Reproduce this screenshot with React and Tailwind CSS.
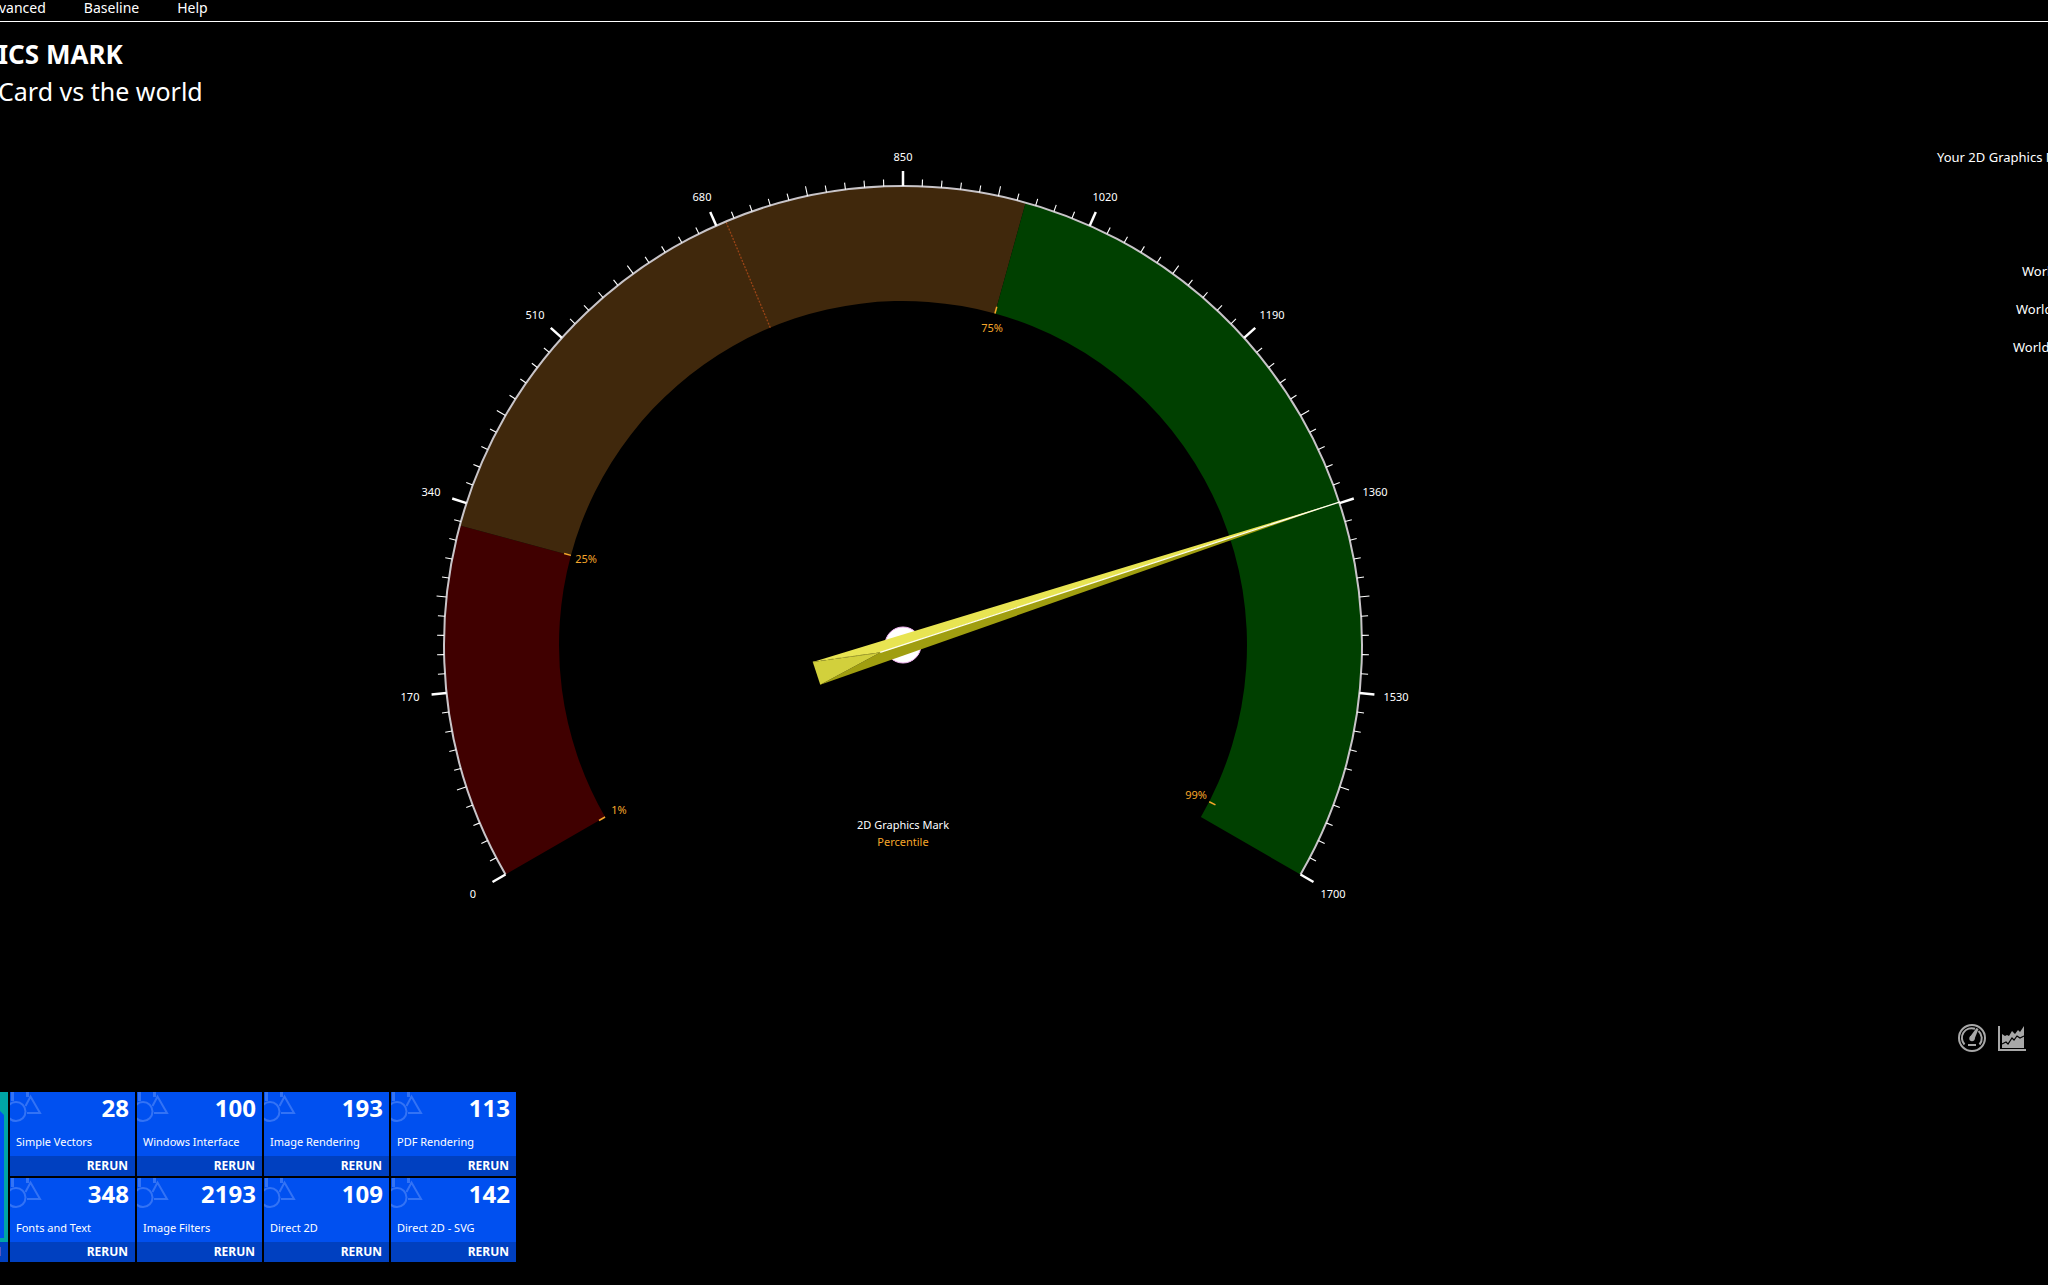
import { useState } from 'react';

const CENTER = { x: 530, y: 505 };
const OUTER = 459;
const INNER = 344;
const MAX_MARK = 1700;

const TESTS = [
  { name: 'Simple Vectors', score: 28 },
  { name: 'Windows Interface', score: 100 },
  { name: 'Image Rendering', score: 193 },
  { name: 'PDF Rendering', score: 113 },
  { name: 'Fonts and Text', score: 348 },
  { name: 'Image Filters', score: 2193 },
  { name: 'Direct 2D', score: 109 },
  { name: 'Direct 2D - SVG', score: 142 },
];

const SCALE = [
  { value: 0, x: 100, y: 758 },
  { value: 170, x: 37, y: 561 },
  { value: 340, x: 58, y: 356 },
  { value: 510, x: 162, y: 179 },
  { value: 680, x: 329, y: 61 },
  { value: 850, x: 530, y: 21 },
  { value: 1020, x: 732, y: 61 },
  { value: 1190, x: 899, y: 179 },
  { value: 1360, x: 1002, y: 356 },
  { value: 1530, x: 1023, y: 561 },
  { value: 1700, x: 960, y: 758 },
];

const PERCENTILES = [
  { label: '1%', angle: 210, x: 246, y: 674 },
  { label: '25%', angle: 164.9, x: 213, y: 423 },
  { label: '75%', angle: 74.5, x: 619, y: 192 },
  { label: '99%', angle: -27.1, x: 823, y: 659 },
];

const MENU = ['vanced', 'Baseline', 'Help'];

function polar(angle, radius) {
  const rad = (angle * Math.PI) / 180;
  return [CENTER.x + radius * Math.cos(rad), CENTER.y - radius * Math.sin(rad)];
}

function band(from, to) {
  const large = from - to > 180 ? 1 : 0;
  return [
    `M ${polar(from, OUTER).join(' ')}`,
    `A ${OUTER} ${OUTER} 0 ${large} 1 ${polar(to, OUTER).join(' ')}`,
    `L ${polar(to, INNER).join(' ')}`,
    `A ${INNER} ${INNER} 0 ${large} 0 ${polar(from, INNER).join(' ')}`,
    'Z',
  ].join(' ');
}

function Spoke({ angle, from, to, ...props }) {
  const [x1, y1] = polar(angle, from);
  const [x2, y2] = polar(angle, to);
  return <line x1={x1} y1={y1} x2={x2} y2={y2} {...props} />;
}

function Gauge({ mark }) {
  const ticks = Array.from({ length: 101 }, (_, i) => i);
  const needle = 210 - (mark / MAX_MARK) * 240;

  return (
    <svg
      viewBox="0 0 1060 780"
      className="h-[780px] w-[1060px] shrink-0 text-[11px]"
      role="img"
      aria-label="2D Graphics Mark gauge"
    >
      <path d={band(210, 164.9)} fill="#400000" />
      <path d={band(164.9, 74.5)} fill="#40280c" />
      <path d={band(74.5, -30)} fill="#004000" />
      <Spoke angle={112.7} from={INNER} to={OUTER} stroke="#9a4416" strokeWidth="1.3" strokeDasharray="2 1.4" />
      <path
        d={`M ${polar(210, OUTER).join(' ')} A ${OUTER} ${OUTER} 0 1 1 ${polar(-30, OUTER).join(' ')}`}
        fill="none"
        stroke="#c8c4c8"
        strokeWidth="2"
      />
      {ticks.map((i) => {
        const major = i % 10 === 0;
        const length = major ? 15 : i % 5 === 0 ? 10 : 7;
        return (
          <Spoke
            key={i}
            angle={210 - i * 2.4}
            from={OUTER}
            to={OUTER + length}
            stroke="#ffffff"
            strokeWidth={major ? 2.5 : 1.1}
          />
        );
      })}

      {SCALE.map(({ value, x, y }) => (
        <text key={value} x={x} y={y} textAnchor="middle" fill="#ffffff">
          {value}
        </text>
      ))}
      {PERCENTILES.map(({ label, angle, x, y }) => (
        <g key={label}>
          <Spoke angle={angle} from={INNER} to={INNER + 7} stroke="#f5a62a" strokeWidth="1.5" />
          <text x={x} y={y} textAnchor="middle" fill="#f5a62a">
            {label}
          </text>
        </g>
      ))}
      <text x="530" y="689" textAnchor="middle" fill="#ffffff">
        2D Graphics Mark
      </text>
      <text x="530" y="706" textAnchor="middle" fill="#f5a62a">
        Percentile
      </text>

      <circle cx={CENTER.x} cy={CENTER.y} r="18" fill="#ffffff" stroke="#f0b0f0" />
      <g transform={`translate(${CENTER.x} ${CENTER.y}) rotate(${-needle})`}>
        <path d="M-91 -12 L460 0 L-24 0 Z" fill="#e8e452" />
        <path d="M-91 12 L460 0 L-24 0 Z" fill="#a09e10" />
        <path d="M-91 -12 L-24 0 L-91 12 Z" fill="#d2d03c" />
        <path d="M-91 -12 L-24 0" stroke="#a09e30" strokeWidth="1" strokeDasharray="5 3" />
        <path d="M-24 0 L460 0" stroke="#fffff0" strokeWidth="1.3" />
      </g>
    </svg>
  );
}

function ShapesIcon() {
  return (
    <svg
      viewBox="0 0 32 30"
      className="absolute left-0 top-0 h-[30px] w-8"
      fill="none"
      stroke="#3373f5"
      strokeWidth="2"
      aria-hidden="true"
    >
      <circle cx="6" cy="19.5" r="9.5" />
      <path d="M2.5 0 V9" strokeWidth="3" />
      <path d="M17.5 0 V5" strokeWidth="3" />
      <path d="M17 21 H30 L20.5 4.5 L15.5 14" />
    </svg>
  );
}

function TestTile({ name, score }) {
  return (
    <article className="relative flex h-[84px] flex-col overflow-hidden bg-[#0050f0] text-white">
      <ShapesIcon />
      <p className="pr-[6px] text-right text-[24px] leading-8 font-bold">{score}</p>
      <h2 className="mt-2 pl-[6px] text-[11px] leading-5 whitespace-nowrap">{name}</h2>
      <button type="button" className="mt-auto h-5 bg-[#0040c0] pr-[7px] text-right text-[12px] leading-5 font-bold">
        RERUN
      </button>
    </article>
  );
}

function GaugeIcon() {
  return (
    <svg viewBox="0 0 28 28" className="size-7" fill="none" stroke="#a8a8a8" aria-hidden="true">
      <circle cx="14" cy="14" r="13" strokeWidth="2" />
      <path d="M6.5 20.5 A9.7 9.7 0 0 1 17 4.8 M20.5 7 A9.7 9.7 0 0 1 21.5 20.5" strokeWidth="2" />
      <circle cx="14" cy="14.5" r="2.7" fill="#a8a8a8" stroke="none" />
      <path d="M11.8 13 L18.5 4 L20.5 5 L16.3 15.5 Z" fill="#a8a8a8" stroke="none" />
      <path d="M10 21 H18" strokeWidth="2" />
    </svg>
  );
}

function ChartIcon() {
  return (
    <svg viewBox="0 0 28 28" className="size-7" fill="none" aria-hidden="true">
      <path d="M1 2 V26 H28" stroke="#a8a8a8" strokeWidth="2" />
      <path d="M4 10 L7 12 L9 11 L11 12 L14 7 L17 10 L20 6 L22 8 L26 2 V24 H4 Z" fill="#a8a8a8" />
      <path d="M4 20 L8 18 L10 20 L14 14 L16 16 L19 12 L22 14 L26 12" stroke="#000000" strokeWidth="1.2" />
    </svg>
  );
}

export default function App() {
  const [view, setView] = useState('gauge');

  return (
    <div className="flex min-h-screen flex-col overflow-hidden bg-black font-['Noto_Sans','Open_Sans',sans-serif] text-white">
      <nav className="-ml-px flex h-[22px] items-start gap-[38px] border-b border-white text-[14px] leading-4">
        {MENU.map((item) => (
          <button key={item} type="button">
            {item}
          </button>
        ))}
      </nav>

      <header className="-ml-0.5 pt-[14px] leading-[37px] whitespace-nowrap">
        <h1 className="text-[26px] font-bold">ICS MARK</h1>
        <p className="text-[25px]">Card vs the world</p>
      </header>

      <main className="flex grow">
        <section className="flex grow justify-center pt-[30px]">
          <Gauge mark={1359} />
        </section>
        <aside className="flex w-[242px] shrink-0 flex-col overflow-hidden pt-[37px] text-[13px] leading-5 whitespace-nowrap">
          <p className="pl-[131px]">Your 2D Graphics M</p>
          <div className="mt-[94px] space-y-[18px]">
            <p className="pl-[216px]">Worl</p>
            <p className="pl-[210px]">World</p>
            <p className="pl-[207px]">World</p>
          </div>
          <div className="mt-auto flex gap-3 pb-10 pl-[152px]">
            <button type="button" aria-label="Gauge view" aria-pressed={view === 'gauge'} onClick={() => setView('gauge')}>
              <GaugeIcon />
            </button>
            <button type="button" aria-label="Chart view" aria-pressed={view === 'chart'} onClick={() => setView('chart')}>
              <ChartIcon />
            </button>
          </div>
        </aside>
      </main>

      <footer className="flex gap-[2px] pb-[23px]">
        <div className="flex w-2 flex-col overflow-hidden bg-[#00a5a5]">
          <svg viewBox="0 0 8 150" className="h-[150px] w-2" aria-hidden="true">
            <path d="M0 19 L4 23 V146 H0 Z" fill="#0050f0" />
          </svg>
          <button
            type="button"
            className="flex h-5 justify-end bg-[#0040c0] pr-[7px] text-[12px] leading-5 font-bold"
          >
            RERUN
          </button>
        </div>
        <div className="grid grid-cols-[repeat(4,125px)] gap-[2px]">
          {TESTS.map((test) => (
            <TestTile key={test.name} {...test} />
          ))}
        </div>
      </footer>
    </div>
  );
}
